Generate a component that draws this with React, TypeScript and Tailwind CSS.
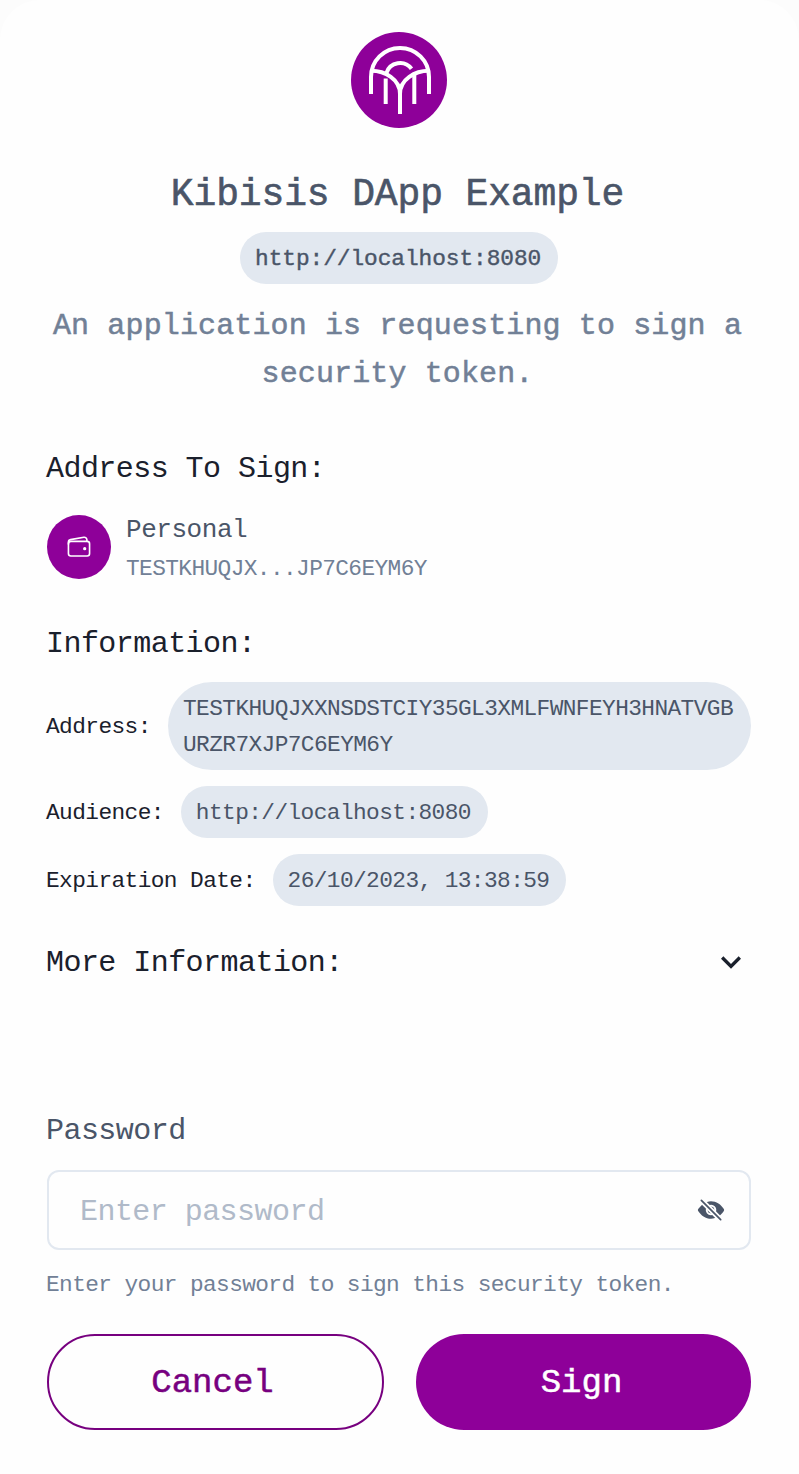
import React from "react";
import { IoEyeOff, IoWalletOutline } from "react-icons/io5";

function Logo() {
  return (
    <svg viewBox="0 0 96 96" className="h-24 w-24 shrink-0" fill="none" stroke="#ffffff" strokeWidth="4">
      <circle cx="48" cy="48" r="48" fill="#8e0099" stroke="none" />
      <path d="M20 62V44.9A29 29 0 0 1 78 44.9V62" />
      <path d="M20 38.8C34 38.8 49 47 49 62V82" />
      <path d="M78 38.8C64 38.8 49 47 49 62" />
      <path d="M34.7 46.5V72M63.3 41.5V72" />
      <path d="M35.4 41A14.3 14.3 0 0 1 60.5 36.8" />
    </svg>
  );
}

function InfoRow({ label, value }: { label: string; value: string }) {
  return (
    <div className="flex h-[52px] items-center gap-[17px] text-[22.8px] tracking-[-0.585px]">
      <span className="-ml-px pt-[3px] text-[#1a202c]">{label}</span>
      <span className="flex h-[52px] items-center rounded-full bg-[#e2e8f0] pt-[3px] pr-[17px] pl-[15px] text-[#4a5568]">
        {value}
      </span>
    </div>
  );
}

export default function App() {
  return (
    <div className="h-[1474px] w-[799px] bg-[#fcfcfc] font-['Liberation_Mono',monospace]">
      <main className="flex h-full flex-col overflow-hidden rounded-t-[40px] bg-[#fefefe] pr-12 pl-[47px]">
        <header className="flex flex-col items-center pt-8">
          <Logo />
          <h1 className="mt-10 h-12 pr-[3px] text-[38px] leading-[54px] tracking-[-0.14px] text-[#4a5568] [-webkit-text-stroke:0.6px]">
            Kibisis DApp Example
          </h1>
          <div className="mt-4 flex h-[52px] w-[318px] items-center rounded-full bg-[#e2e8f0] pt-[3px] pl-[15px] text-[22.8px] tracking-[-0.05px] text-[#4a5568] [-webkit-text-stroke:0.4px]">
            http://localhost:8080
          </div>
          <p className="mt-[18px] pr-[3px] text-center text-[30px] leading-[48px] tracking-[0.13px] whitespace-nowrap text-[#718096] [-webkit-text-stroke:0.5px]">
            An application is requesting to sign a
            <br />
            security token.
          </p>
        </header>

        <h2 className="mt-[46px] -ml-px h-12 text-[30px] leading-[50px] tracking-[-0.55px] text-[#1a202c]">Address To Sign:</h2>
        <div className="mt-[19px] flex h-[72px] items-center gap-[15px]">
          <div className="flex size-16 items-center justify-center rounded-full bg-[#8e0099] text-white">
            <IoWalletOutline size={26} />
          </div>
          <div className="flex flex-col">
            <span className="h-9 text-[26px] leading-[42px] tracking-[-0.45px] text-[#4a5568]">Personal</span>
            <span className="h-10 text-[22.8px] leading-[48px] tracking-[-0.6px] text-[#718096]">TESTKHUQJX...JP7C6EYM6Y</span>
          </div>
        </div>

        <h2 className="mt-9 -ml-px h-12 text-[30px] leading-[50px] tracking-[-0.55px] text-[#1a202c]">Information:</h2>
        <div className="mt-[15px] flex flex-col gap-4">
          <div className="flex h-[88px] items-center justify-between text-[22.8px] tracking-[-0.585px]">
            <span className="-ml-px pt-[3px] text-[#1a202c]">Address:</span>
            <span className="h-[88px] w-[583px] rounded-[44px] bg-[#e2e8f0] pt-[9px] pl-[15px] leading-9 whitespace-nowrap text-[#4a5568]">
              TESTKHUQJXXNSDSTCIY35GL3XMLFWNFEYH3HNATVGB
              <br />
              URZR7XJP7C6EYM6Y
            </span>
          </div>
          <InfoRow label="Audience:" value="http://localhost:8080" />
          <InfoRow label="Expiration Date:" value="26/10/2023, 13:38:59" />
        </div>
        <button className="mt-8 flex h-12 shrink-0 items-center justify-between text-[30px] tracking-[-0.55px] text-[#1a202c]">
          <span className="-ml-px pt-0.5">More Information:</span>
          <svg viewBox="0 0 24 24" className="size-10" fill="currentColor">
            <path d="M16.59 8.59L12 13.17 7.41 8.59 6 10l6 6 6-6z" />
          </svg>
        </button>

        <section className="mt-[120px] flex flex-col">
          <label className="-ml-px h-12 text-[30px] leading-[50px] tracking-[-0.55px] text-[#4a5568]">Password</label>
          <div className="mt-4 flex h-20 items-center justify-between rounded-xl border-2 border-[#e2e8f0] pr-6 pl-[31px]">
            <span className="pt-1 text-[30px] tracking-[-0.55px] text-[#b0bac9]">Enter password</span>
            <IoEyeOff size={28} color="#4a5568" />
          </div>
          <p className="mt-4 -ml-px h-9 text-[22.8px] leading-[38px] tracking-[-0.6px] text-[#718096]">
            Enter your password to sign this security token.
          </p>
        </section>
        <footer className="mt-8 flex gap-8 text-[34px] [-webkit-text-stroke:0.5px]">
          <button className="h-24 w-[337px] rounded-full border-2 border-[#77007f] pt-0.5 pr-1.5 text-[#77007f]">Cancel</button>
          <button className="h-24 w-[335px] rounded-full bg-[#8e0099] pt-0.5 pr-1 text-white">Sign</button>
        </footer>
      </main>
    </div>
  );
}
